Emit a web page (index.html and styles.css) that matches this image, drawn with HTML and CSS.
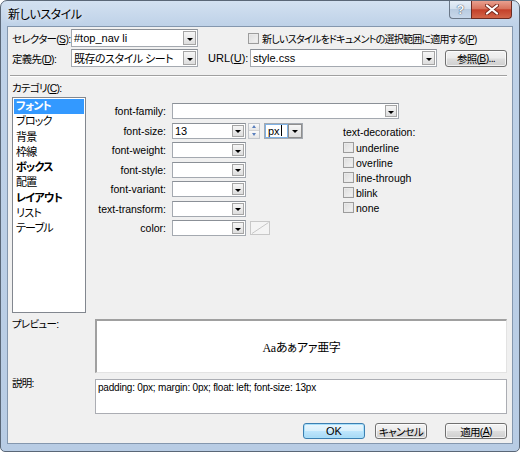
FILE: index.html
```html
<!DOCTYPE html>
<html lang="ja">
<head>
<meta charset="utf-8">
<title>新しいスタイル</title>
<link rel="stylesheet" href="styles.css">
</head>
<body>
<div class="window">
  <div class="titlebar">
    <span class="title">新しいスタイル</span>
    <div class="caps">
      <div class="cap help">?</div>
      <div class="cap close">
        <svg width="14" height="11" viewBox="0 0 14 11"><path d="M2 1.5 L12 9.5 M12 1.5 L2 9.5" stroke="#7a2b1f" stroke-width="4" stroke-linecap="round"/><path d="M2 1.5 L12 9.5 M12 1.5 L2 9.5" stroke="#ffffff" stroke-width="2.2" stroke-linecap="round"/></svg>
      </div>
    </div>
  </div>
  <div class="client">
    <div class="row">
      <span class="lbl jp w59">セレクター(<u>S</u>):</span>
      <div class="combo w127"><span class="val">#top_nav li</span><span class="ddb"></span></div>
      <div class="applychk"><span class="chk"></span><span class="jp applytext">新しいスタイルをドキュメントの選択範囲に適用する(<u>P</u>)</span></div>
    </div>
    <div class="row r2">
      <span class="lbl jp w59">定義先(<u>D</u>):</span>
      <div class="combo w127"><span class="val jp">既存のスタイル シート</span><span class="ddb"></span></div>
      <span class="lbl url">URL(<u>U</u>):</span>
      <div class="combo w187"><span class="val">style.css</span><span class="ddb"></span></div>
      <div class="btn browse jp">参照(<u>B</u>)...</div>
    </div>
    <div class="sep"></div>
    <div class="catlbl jp">カテゴリ(<u>C</u>):</div>
    <div class="main">
      <ul class="list jp">
        <li class="sel">フォント</li>
        <li>ブロック</li>
        <li>背景</li>
        <li>枠線</li>
        <li class="b">ボックス</li>
        <li>配置</li>
        <li class="b">レイアウト</li>
        <li>リスト</li>
        <li>テーブル</li>
      </ul>
      <div class="panel">
        <div class="frow">
          <span class="flbl">font-family:</span>
          <div class="combo sm w227"><span class="val"></span><span class="ddb"></span></div>
        </div>
        <div class="lower">
          <div class="rows">
            <div class="frow">
              <span class="flbl">font-size:</span>
              <div class="combo sm w74"><span class="val">13</span><span class="ddb"></span></div>
              <div class="spin"><span class="up"></span><span class="dn"></span></div>
              <div class="px"><span class="pxtext">px<i class="caret"></i></span><span class="ddb"></span></div>
            </div>
            <div class="frow">
              <span class="flbl">font-weight:</span>
              <div class="combo sm w74"><span class="val"></span><span class="ddb"></span></div>
            </div>
            <div class="frow">
              <span class="flbl">font-style:</span>
              <div class="combo sm w74"><span class="val"></span><span class="ddb"></span></div>
            </div>
            <div class="frow">
              <span class="flbl">font-variant:</span>
              <div class="combo sm w74"><span class="val"></span><span class="ddb"></span></div>
            </div>
            <div class="frow">
              <span class="flbl">text-transform:</span>
              <div class="combo sm w74"><span class="val"></span><span class="ddb"></span></div>
            </div>
            <div class="frow">
              <span class="flbl">color:</span>
              <div class="combo sm w74"><span class="val"></span><span class="ddb"></span></div>
              <div class="swatch"><svg width="18" height="12" viewBox="0 0 18 12"><path d="M1 11.5 L17.5 0.5" stroke="#c8c8c8" stroke-width="1"/></svg></div>
            </div>
          </div>
          <div class="deco">
            <div class="dlbl">text-decoration:</div>
            <div class="dline"><span class="chk"></span>underline</div>
            <div class="dline"><span class="chk"></span>overline</div>
            <div class="dline"><span class="chk"></span>line-through</div>
            <div class="dline"><span class="chk"></span>blink</div>
            <div class="dline"><span class="chk"></span>none</div>
          </div>
        </div>
      </div>
    </div>
    <div class="prow preview">
      <span class="plbl jp">プレビュー:</span>
      <div class="pbox"><span class="ptext"><span class="serif">Aa</span>あぁアァ亜字</span></div>
    </div>
    <div class="prow desc">
      <span class="plbl jp">説明:</span>
      <div class="dbox">padding: 0px; margin: 0px; float: left; font-size: 13px</div>
    </div>
    <div class="btns">
      <div class="btn ok">OK</div>
      <div class="btn cancel jp">キャンセル</div>
      <div class="btn apply jp">適用(<u>A</u>)</div>
    </div>
  </div>
</div>
</body>
</html>
```

FILE: styles.css
```css
* { box-sizing: border-box; }
html, body { margin: 0; padding: 0; background: #ffffff; }
body {
  font-family: "Liberation Sans", "Noto Sans CJK JP", sans-serif;
  font-size: 11px;
  color: #000;
  font-feature-settings: "palt";
}
.jp { font-size: 10.5px; letter-spacing: -0.7px; }
u { text-decoration: underline; text-underline-offset: 1px; }

.window {
  width: 520px;
  height: 452px;
  border: 1px solid #5a6777;
  border-radius: 7px 7px 5px 5px;
  background: linear-gradient(180deg, #d3e1f1 0, #bfd2e8 24px, #b8cce4 100%);
  display: flex;
  flex-direction: column;
  padding: 0 6px 7px;
  overflow: hidden;
}
.titlebar { height: 25px; flex: none; display: flex; align-items: flex-start; }
.title {
  font-family: "Noto Sans CJK JP", sans-serif;
  font-size: 12px;
  line-height: 14px;
  margin-top: 6px;
  padding-left: 1px;
  letter-spacing: -0.4px;
  color: #000;
  text-shadow: 0 0 6px rgba(255,255,255,0.9);
}
.caps { margin-left: auto; margin-right: 1px; display: flex; }
.cap {
  height: 18px;
  border: 1px solid #6a7788;
  border-top: none;
  display: flex; align-items: center; justify-content: center;
}
.help {
  width: 22px;
  border-right: none;
  border-radius: 0 0 0 4px;
  background: linear-gradient(180deg, #e6eef7 0, #d3e0ee 45%, #b9cbe0 50%, #c7d7ea 100%);
  color: #f6f9fc;
  font-weight: bold;
  font-size: 13px;
  text-shadow: 0 0 1px #3d4d63, 0 0 1px #3d4d63;
}
.close {
  width: 41px;
  border-color: #6d2b22;
  border-radius: 0 0 4px 0;
  background: linear-gradient(180deg, #e9a08f 0, #d8735d 45%, #c4402a 52%, #d2664a 100%);
}

.client {
  flex: 1;
  background: #f0f0f0;
  border: 1px solid #8497ae;
  padding: 2px 5px 0 4px;
  display: flex;
  flex-direction: column;
}

.row { display: flex; align-items: center; height: 18px; }
.r2 { margin-top: 2px; }
.lbl { flex: none; white-space: nowrap; }
.w59 { width: 59px; }
.url { width: 42px; margin-left: 10px; }

.combo {
  flex: none;
  height: 18px;
  display: flex;
  align-items: center;
  background: #fff;
  border: 1px solid #a4a9b0;
  border-top-color: #8b9097;
}
.combo .val { flex: 1; padding-left: 2px; white-space: nowrap; overflow: hidden; }
.combo .val.jp { font-size: 11px; letter-spacing: -0.5px; }
.combo.sm { height: 16px; }
.w127 { width: 127px; }
.w187 { width: 187px; }
.w227 { width: 227px; }
.w74 { width: 74px; }
.ddb {
  flex: none;
  width: 13px;
  height: 14px;
  margin-right: 1px;
  border: 1px solid #a5a5a5;
  background: linear-gradient(180deg, #f6f6f6, #dedede);
  display: flex; align-items: center; justify-content: center;
}
.combo.sm .ddb { height: 12px; width: 12px; }
.ddb::after {
  content: "";
  width: 0; height: 0;
  border-left: 3px solid transparent;
  border-right: 3px solid transparent;
  border-top: 3px solid #000;
  margin-top: 2px;
}

.applychk { display: flex; align-items: center; margin-left: 50px; white-space: nowrap; }
.applychk .chk { margin-right: 3px; }
.applytext { font-size: 10px; letter-spacing: -0.75px; }
.chk {
  flex: none;
  width: 11px; height: 11px;
  border: 1px solid #9c9c9c;
  background: linear-gradient(135deg, #dcdcdc, #f4f4f4);
  box-shadow: inset 0 0 0 1px #e9e9e9;
}

.btn {
  flex: none;
  display: flex; align-items: center; justify-content: center;
  border: 1px solid #707070;
  border-radius: 3px;
  background: linear-gradient(180deg, #f3f3f3 0, #ebebeb 48%, #dddddd 52%, #cfcfcf 100%);
  box-shadow: inset 0 0 0 1px rgba(255,255,255,0.7);
  white-space: nowrap;
}
.browse { width: 62px; height: 17px; margin-left: 8px; }

.sep {
  flex: none;
  margin: 8px 0 0 -2px;
  width: 497px;
  border-top: 1px solid #a0a0a0;
  border-bottom: 1px solid #ffffff;
}
.catlbl { margin-top: 4px; line-height: 14px; height: 14px; }

.main { display: flex; margin-top: 2px; height: 216px; flex: none; }
.list {
  list-style: none;
  margin: 0;
  padding: 1px 1px;
  width: 74px;
  height: 216px;
  background: #fff;
  border: 1px solid #82878f;
  flex: none;
  font-size: 11px;
  letter-spacing: -0.8px;
}
.list li { line-height: 15.25px; height: 15.25px; padding-left: 2px; white-space: nowrap; }
.list li.sel { background: #3399ff; color: #fff; font-weight: bold; }
.list li.b { font-weight: bold; }

.panel { flex: 1; padding-top: 6px; }
.frow { display: flex; align-items: center; height: 16px; }
.flbl { width: 80px; margin-right: 6px; text-align: right; flex: none; font-size: 10.5px; white-space: nowrap; }
.lower { display: flex; margin-top: 3.5px; }
.rows { width: 257px; flex: none; display: flex; flex-direction: column; gap: 3.5px; }

.spin {
  flex: none;
  width: 12px; height: 16px;
  margin-left: 2px;
  display: flex; flex-direction: column;
  border: 1px solid #c2c6cc;
  background: #fff;
}
.spin span {
  flex: 1;
  display: flex; align-items: center; justify-content: center;
  background: linear-gradient(180deg, #fafafa, #e6e6e6);
}
.spin .up { border-bottom: 1px solid #d4d4d4; }
.spin .up::after {
  content: ""; width: 0; height: 0;
  border-left: 2.5px solid transparent; border-right: 2.5px solid transparent;
  border-bottom: 3px solid #5a7fbd;
}
.spin .dn::after {
  content: ""; width: 0; height: 0;
  border-left: 2.5px solid transparent; border-right: 2.5px solid transparent;
  border-top: 3px solid #5a7fbd;
}
.px {
  flex: none;
  width: 39px; height: 16px;
  margin-left: 4px;
  display: flex; align-items: center;
  border: 1px solid #a4a9b0;
  background: #fff;
}
.pxtext {
  flex: 1;
  height: 14px;
  border: 1px solid #7fb1e3;
  padding-left: 2px;
  line-height: 12px;
  display: flex; align-items: center;
}
.caret { display: inline-block; width: 1px; height: 11px; background: #000; margin-left: 1px; }
.px .ddb { height: 14px; width: 14px; margin: 0; border-color: #8e8e8e; }

.swatch {
  flex: none;
  width: 20px; height: 14px;
  margin-left: 4px;
  border: 1px solid #c8c8c8;
  background: #f4f4f4;
}
.swatch svg { display: block; }

.deco { margin-top: 2.5px; font-size: 10.5px; }
.dlbl { line-height: 15px; }
.dline { display: flex; align-items: center; height: 15px; white-space: nowrap; }
.dline .chk { margin-right: 2px; }

.prow { display: flex; flex: none; }
.preview { margin-top: 6px; }
.desc { margin-top: 6px; }
.plbl { width: 83px; flex: none; line-height: 14px; }
.preview .plbl { margin-top: -2px; }
.desc .plbl { margin-top: -3px; }
.pbox {
  width: 412px; height: 54px;
  background: #fff;
  border-style: solid;
  border-width: 2px 1px 1px 2px;
  border-color: #a0a0a0 #e3e3e3 #e3e3e3 #a0a0a0;
  display: flex; align-items: center; justify-content: center;
}
.ptext { font-family: "Noto Sans CJK JP", sans-serif; font-size: 12px; letter-spacing: -0.3px; }
.serif { font-family: "Liberation Serif", serif; font-size: 12px; }
.dbox {
  width: 412px; height: 35px;
  background: #fff;
  border: 1px solid #abadb3;
  padding: 1px 2px;
  line-height: 13px;
  font-size: 10px;
  letter-spacing: -0.2px;
  white-space: nowrap;
}

.btns { display: flex; justify-content: flex-end; margin-top: 9px; }
.btns .btn { height: 16px; }
.ok {
  width: 62px; margin-right: 10px;
  border-color: #3c7fb1;
  background: linear-gradient(180deg, #eaf6fd 0, #d9f0fc 48%, #bee6fd 52%, #a7d9f5 100%);
  box-shadow: inset 0 0 0 1px #a8e0fb;
}
.cancel { width: 52px; margin-right: 18px; }
.apply { width: 62px; }
```
